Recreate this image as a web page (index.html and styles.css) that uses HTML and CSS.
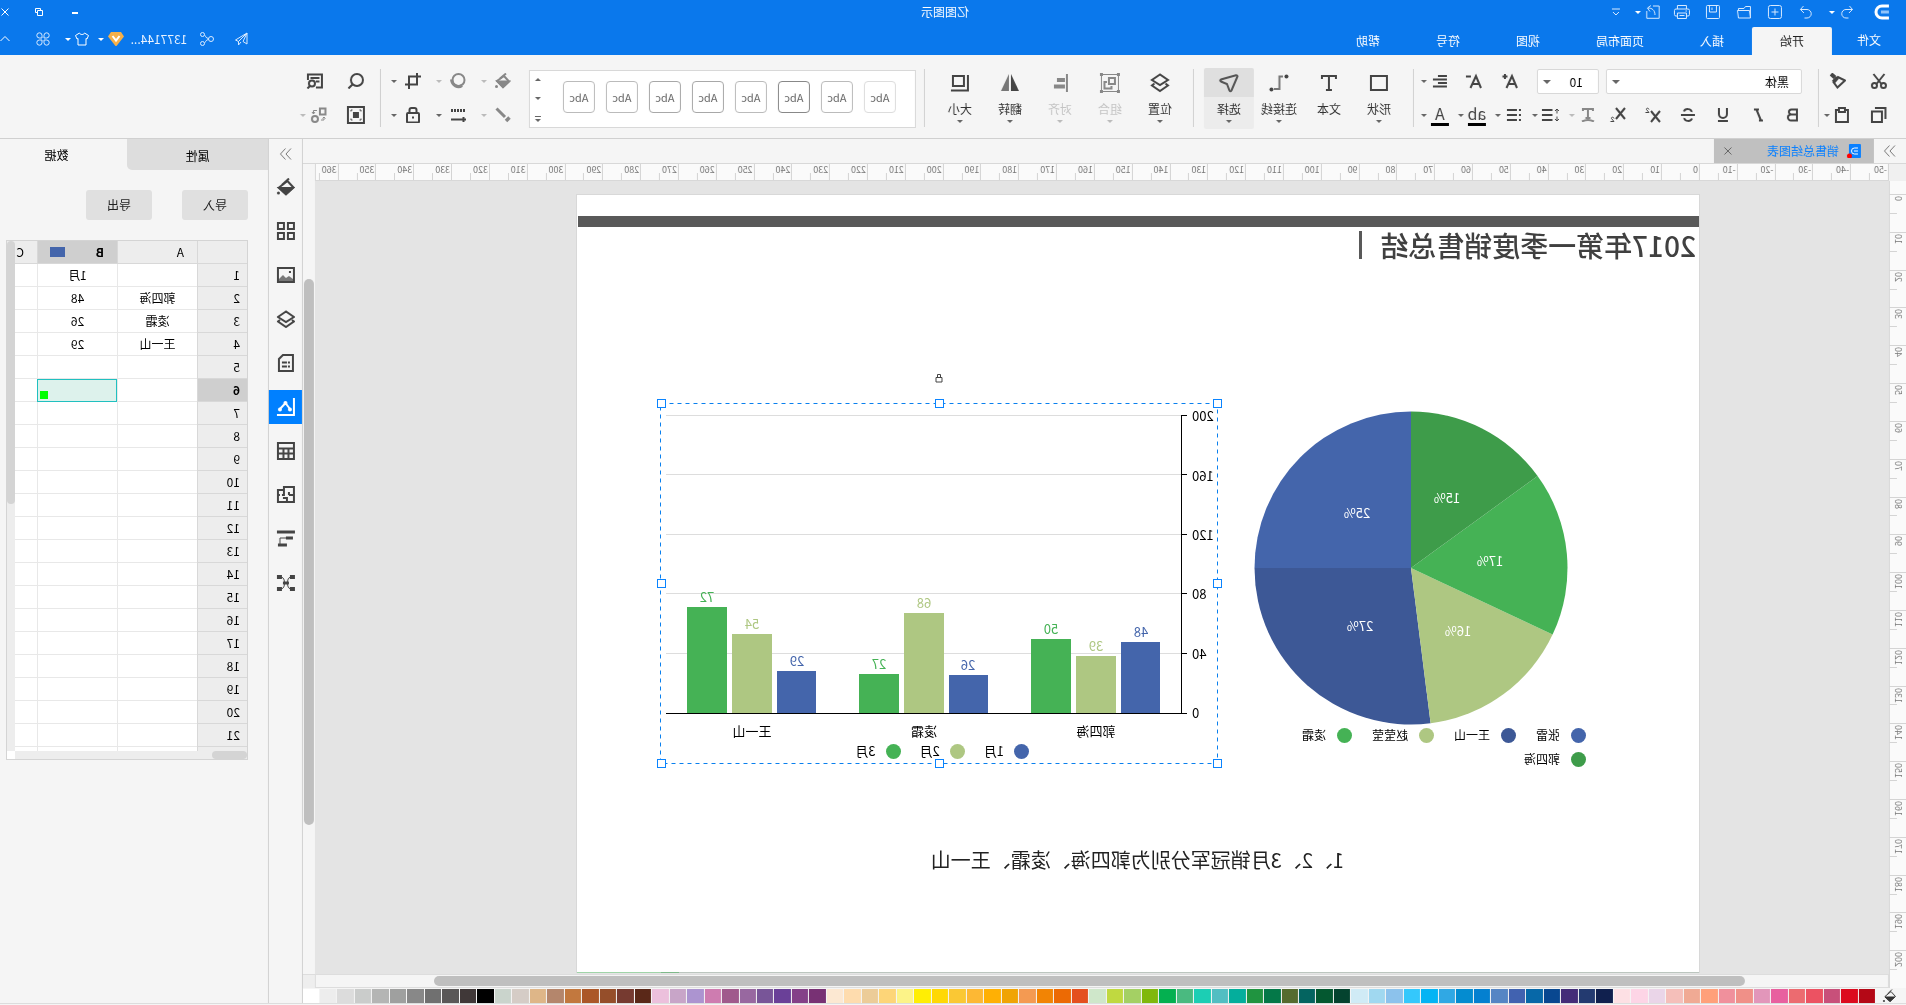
FILE: index.html
```html
<!DOCTYPE html>
<html lang="zh-CN">
<head>
<meta charset="utf-8">
<title>亿图图示</title>
<link rel="stylesheet" href="styles.css">
</head>
<body>
<div class="app">

<header class="top">
  <div class="titlebar">
    <div class="quick">
      <svg class="logo" viewBox="0 0 16 16"><path d="M1 2h7a6 6 0 0 1 0 12H1" fill="none" stroke="#fff" stroke-width="3"/><path d="M1 8h8" stroke="#8fc3fa" stroke-width="3"/></svg>
      <button class="q undo" aria-label="撤销"><svg class="i14" viewBox="0 0 14 14"><path d="M4.500 1 1.500 4.500 5 8M1.500 4.500H8a4 4 0 0 1 0 8.500H5.500"/></svg><span class="caret"></span></button>
      <button class="q" aria-label="重做"><svg class="i14" viewBox="0 0 14 14"><path d="M9.500 1l3 3.500L9 8M12.500 4.500H6A4 4 0 0 0 6 13h2.500"/></svg></button>
      <button class="q" aria-label="新建"><svg class="i14" viewBox="0 0 14 14"><rect x=".5" y=".5" width="13" height="13" rx="2"/><path d="M7 3.500v7M3.500 7h7"/></svg></button>
      <button class="q" aria-label="打开"><svg class="i14" viewBox="0 0 14 14"><path d="M.5 13V1.500h5l1.500 2h5.500v2M.5 13l1-7.500h12l-1 7.500z"/></svg></button>
      <button class="q" aria-label="保存"><svg class="i14" viewBox="0 0 14 14"><rect x=".5" y=".5" width="13" height="13" rx="1"/><path d="M3.500.5v6.500h7V.5M8 2.500v2.500"/></svg></button>
      <button class="q" aria-label="打印"><svg class="i16" viewBox="0 0 16 14"><path d="M3.500 4V.5h9V4M3.500 11H2a1.500 1.500 0 0 1-1.500-1.500v-4A1.500 1.500 0 0 1 2 4h12a1.500 1.500 0 0 1 1.500 1.500v4A1.500 1.500 0 0 1 14 11h-1.500M3.500 8h9v5.500h-9zM5.500 10.500h5M3 6h1.500"/></svg></button>
      <button class="q export" aria-label="导出"><svg class="i14" viewBox="0 0 14 14"><path d="M7 1H.8v12.300h12.400V6M5 10c0-5 3-7 7-7M9 .5 12.500 3 10 6.500"/></svg><span class="caret"></span></button>
      <button class="q more" aria-label="更多"><svg class="i8" viewBox="0 0 8 8"><path d="M0 1h8M1 4l3 3 3-3"/></svg></button>
    </div>
    <div class="app-title">亿图图示</div>
    <div class="window">
      <button class="w" aria-label="最小化"><svg class="i8" viewBox="0 0 8 8"><path class="thick" d="M1 5h6"/></svg></button>
      <button class="w" aria-label="还原"><svg class="i8" viewBox="0 0 8 8"><path d="M2.500 2.500V.5h5v4h-2M.5 2.500h5v5h-5z"/></svg></button>
      <button class="w last" aria-label="关闭"><svg class="i8" viewBox="0 0 8 8"><path d="M.5.5l7 7M7.500.5l-7 7"/></svg></button>
    </div>
  </div>
  <div class="menubar">
    <nav class="tabs">
      <a class="file" href="#">文件</a><a class="active" href="#">开始</a><a href="#">插入</a><a href="#">页面布局</a><a href="#">视图</a><a href="#">符号</a><a href="#">帮助</a>
    </nav>
    <div class="account">
      <button class="a" aria-label="发送"><svg class="i14" viewBox="0 0 14 14"><path d="M1 1l11.500 7-3 1.500zM1 1v11L5 9.500zM9.500 9.500v3.500L7 10"/></svg></button>
      <button class="a" aria-label="分享"><svg class="i14" viewBox="0 0 14 14"><circle cx="3" cy="7" r="2.500"/><circle cx="11.500" cy="2.500" r="2"/><circle cx="11.500" cy="11.500" r="2"/><path d="M5.500 6.500c3 0 3-3.500 4-3.500M5.500 7.500c3 0 3 3.500 4 3.500"/></svg></button>
      <button class="user">1377144...</button>
      <button class="gem" aria-label="会员"><svg class="i16" viewBox="0 0 16 14"><path d="M3 0h10l3 4.500L8.500 14h-1L0 4.500z" fill="#f5b04a" stroke="none"/><path class="thick" d="M4.500 4 8 8.500 11.500 4" stroke="#fff"/></svg><span class="caret"></span></button>
      <button class="shirt" aria-label="皮肤"><svg class="i14" viewBox="0 0 14 14"><path d="M4.500 1 .5 3.500 2 7l1-.5V13h8V6.500l1 .5 1.500-3.500-4-2.500c-.5 2-4.500 2-5 0z"/></svg><span class="caret"></span></button>
      <button class="a" aria-label="应用"><svg class="i14" viewBox="0 0 14 14"><path d="M6 6H3.300A2.600 2.600 0 1 1 6 3.300zM8 6h2.700A2.600 2.600 0 1 0 8 3.300zM6 8H3.300A2.600 2.600 0 1 0 6 10.700zM8 8h2.700A2.600 2.600 0 1 1 8 10.700z"/></svg></button>
      <button class="fold" aria-label="收起"><svg class="i10" viewBox="0 0 10 8"><path d="M.5 6 5 1.500 9.500 6"/></svg></button>
    </div>
  </div>
</header>

<section class="ribbon">
  <div class="group clip">
    <div class="row">
      <button class="b34" aria-label="剪切"><svg class="i16" viewBox="0 0 16 16"><path d="M2.500 1l8 10M13.500 1l-8 10"/><circle cx="3.500" cy="12.500" r="2.500"/><circle cx="12.500" cy="12.500" r="2.500"/></svg></button>
      <button class="b34" aria-label="格式刷"><svg class="i16" viewBox="0 0 16 16"><path d="M1 7.500 8 4l4.500 5-4 5.500z"/><path d="M8.500 4.500 12.500 9" stroke-width="4"/><path d="M11 4.500 15 1" stroke-width="4"/></svg></button>
    </div>
    <div class="row">
      <button class="b34" aria-label="复制"><svg class="i16" viewBox="0 0 16 16"><rect x="5" y="4.500" width="10" height="10.500"/><path d="M1.500 12V1H12"/></svg></button>
      <button class="split" aria-label="粘贴"><svg class="i16" viewBox="0 0 16 16"><path d="M5 3H2v12h12V3h-3"/><rect x="5" y="1" width="6" height="4"/></svg><span class="caret"></span></button>
    </div>
  </div>
  <div class="group font">
    <div class="row">
      <button class="combo family" aria-label="字体"><span>黑体</span><span class="caret"></span></button>
      <button class="combo size" aria-label="字号"><span>10</span><span class="caret"></span></button>
      <button class="b36" aria-label="增大字号"><svg class="i16" viewBox="0 0 16 16"><path d="M1 15 6 3l5.500 12M3 11h6.500M13 1v5M10.500 3.500h5"/></svg></button>
      <button class="b36" aria-label="减小字号"><svg class="i16" viewBox="0 0 16 16"><path d="M1 15 6 3l5.500 12M3 11h6.500M11 3.500h5"/></svg></button>
      <button class="split push" aria-label="对齐"><svg class="i14" viewBox="0 0 14 14"><path d="M0 2h9M0 5.500h14M0 9h9M0 12.500h14"/></svg><span class="caret"></span></button>
    </div>
    <div class="row">
      <button class="b35" aria-label="加粗"><svg class="i14" viewBox="0 0 14 14"><path d="M3 1.500h5.500a2.500 2.500 0 0 1 0 5H3zM3 6.500h6a3 3 0 0 1 0 6H3z"/></svg></button>
      <button class="b35" aria-label="斜体"><svg class="i14" viewBox="0 0 14 14"><path d="M3 1.500h5M8 12.500h4M5.500 1.500 10 12.500" transform="translate(14 0) scale(-1 1)"/></svg></button>
      <button class="b35" aria-label="下划线"><svg class="i14" viewBox="0 0 14 14"><path d="M3 0v6a4 4 0 0 0 8 0V0M2 13h10"/></svg></button>
      <button class="b35" aria-label="删除线"><svg class="i14" viewBox="0 0 14 14"><path d="M0 7h14M11 3.500C10 0 3 .5 3.500 4M3 10.500c1 3.500 8 3 7.500-.5"/></svg></button>
      <button class="b35" aria-label="上标"><svg class="i16" viewBox="0 0 16 16"><path d="M1 4l9 11M10 4 1 15"/><path d="M12 2.500c.5-2 3-1.500 2.500 0L12 5.500h3.500" stroke-width="1"/></svg></button>
      <button class="b35" aria-label="下标"><svg class="i16" viewBox="0 0 16 16"><path d="M1 1l9 11M10 1 1 12"/><path d="M12 11.500c.5-2 3-1.500 2.500 0L12 14.500h3.500" stroke-width="1"/></svg></button>
      <button class="split off" aria-label="文字方向"><svg class="i14" viewBox="0 0 14 14"><path d="M2 3V1h10v2M7 1v9M4.500 10h5M1 13.500c4-2 8-2 12 0"/></svg><span class="caret"></span></button>
      <button class="split" aria-label="行距"><svg class="i18" viewBox="0 0 18 14"><path d="M7.500 2H18M7.500 7H18M7.500 12H18"/><path d="M3 1v4.500M3 8.500V13M1 3l2-2 2 2M1 11l2 2 2-2" stroke-width="1"/></svg><span class="caret"></span></button>
      <button class="split" aria-label="项目符号"><svg class="i14" viewBox="0 0 14 14"><path d="M4 2h10M4 7h10M4 12h10M0 2h2M0 7h2M0 12h2"/></svg><span class="caret"></span></button>
      <button class="split mark" aria-label="突出显示"><span class="glyph">ab</span><span class="caret"></span></button>
      <button class="split mark" aria-label="字体颜色"><span class="glyph">A</span><span class="caret"></span></button>
    </div>
  </div>
  <div class="group tools">
    <button class="big"><svg class="i20" viewBox="0 0 20 20"><rect x="2" y="3" width="16" height="14"/></svg>形状<span class="caret"></span></button>
    <button class="big"><svg class="i20" viewBox="0 0 20 20"><path d="M3 6V3h14v3M10 3v14M7 17h6"/></svg>文本<span class="caret none"></span></button>
    <button class="big"><svg class="i20" viewBox="0 0 20 20"><path d="M17 16.500h-6V4H4" transform="translate(21 20.500) scale(-1 -1)" stroke="none"/><path d="M3 3h8v13h6" stroke="none"/><path d="M6 3.500h3.500V16H15" stroke="#777"/><circle cx="2.500" cy="3.500" r="2" fill="#444" stroke="none"/><circle cx="17.500" cy="16.500" r="2" fill="#444" stroke="none"/></svg>连接线<span class="caret"></span></button>
    <button class="big on"><svg class="i20" viewBox="0 0 20 20"><path d="M1.500 3.500Q1.500 2 3 2.200L18 6.500q1.500 1 0 2L12 11 9.500 17.500q-1 1.500-2 0z" stroke="#555"/></svg>选择<span class="caret"></span></button>
  </div>
  <div class="group arrange">
    <button class="big"><svg class="i20" viewBox="0 0 20 20"><path d="M10 1.500 18 7l-8 5-8-5zM4.500 10.500 2 12.500l8 5.500 8-5.500-2.500-2"/></svg>位置<span class="caret"></span></button>
    <button class="big off"><svg class="i20" viewBox="0 0 20 20"><path d="M1.500 1.500h17v17h-17z" stroke-width="1"/><path d="M0 0h3v3H0zM17 0h3v3h-3zM0 17h3v3H0zM17 17h3v3h-3z" fill="#888" stroke="none"/><rect x="5" y="5" width="6" height="6"/><path d="M13 9h2.500v6.500H8.500V13"/></svg>组合<span class="caret"></span></button>
    <button class="big off"><svg class="i20" viewBox="0 0 20 20"><path d="M3 1v18"/><path d="M5 7h8M5 13.500h11" stroke-width="4"/></svg>对齐<span class="caret"></span></button>
    <button class="big"><svg class="i20" viewBox="0 0 20 20"><path d="M9 1v17H1z" fill="#444" stroke="none"/><path d="M11 1v17h8z" fill="#777" stroke="none"/></svg>翻转<span class="caret"></span></button>
    <button class="big"><svg class="i20" viewBox="0 0 20 20"><rect x="6" y="3" width="11" height="10"/><path d="M2 2v15.500h17"/></svg>大小<span class="caret"></span></button>
  </div>
  <div class="gallery">
    <button class="s1">Abc</button><button class="s2">Abc</button><button class="s4">Abc</button><button class="s2">Abc</button><button class="s3">Abc</button><button class="s3">Abc</button><button class="s2">Abc</button><button class="s2">Abc</button>
    <div class="steps"><span class="caret up"></span><span class="caret"></span><svg class="last" viewBox="0 0 6 6"><path d="M0 .5h6"/><path d="M0 3h6L3 6z" fill="#666" stroke="none"/></svg></div>
  </div>
  <div class="group style">
    <div class="row">
      <button class="wide off" aria-label="填充"><svg class="i16" viewBox="0 0 16 16"><path d="M7 3 2 8.500 8 14l6-6z"/><path d="M2 8.500h11.500L8 14z" fill="currentColor"/><path d="M5 .5l6 5"/><circle cx="14.500" cy="13.500" r="1.500" fill="currentColor" stroke="none"/></svg><span class="caret"></span></button>
      <button class="wide off" aria-label="阴影"><svg class="i16" viewBox="0 0 16 16"><circle cx="7.500" cy="7" r="6"/><path d="M4 12.500c4 3 10 0 10.500-6" stroke-width="3"/></svg><span class="caret"></span></button>
      <button class="wide" aria-label="裁剪"><svg class="i16" viewBox="0 0 16 16"><path d="M0 3.500h12V12M4 0v11.500h12M12 12v4"/></svg><span class="caret"></span></button>
    </div>
    <div class="row">
      <button class="wide off" aria-label="线条颜色"><svg class="i16" viewBox="0 0 16 16"><path d="M14.500 1.500 6 10" stroke-width="3"/><path d="M4.500 11 2 13.500" stroke-width="5"/></svg><span class="caret"></span></button>
      <button class="wide" aria-label="线型"><svg class="i16" viewBox="0 0 16 16"><path d="M1 3.500h14" stroke-width="3" stroke-dasharray="2 1"/><path d="M0 12.500h15M2.500 10v5"/></svg><span class="caret"></span></button>
      <button class="wide" aria-label="锁定"><svg class="i16" viewBox="0 0 16 16"><rect x="2" y="6" width="12" height="9.500" rx="1"/><path d="M4.500 6V3q0-2 2-2h3q2 0 2 2v3M7 10.500h2"/></svg><span class="caret"></span></button>
    </div>
  </div>
  <div class="group find">
    <div class="row">
      <button class="b26" aria-label="查找"><svg class="i16" viewBox="0 0 16 16"><circle cx="7" cy="7" r="6"/><path d="M11.500 11.500 15.500 15.500"/></svg></button>
      <button class="b34" aria-label="查找替换"><svg class="i16" viewBox="0 0 16 16"><path d="M7 14.500H1V1.500h14V7M3.500 5h9M3.500 8.500H7"/><circle cx="11" cy="10.500" r="3"/><path d="M13 13l2.500 2.500"/></svg></button>
    </div>
    <div class="row">
      <button class="b26" aria-label="适应窗口"><svg class="i18" viewBox="0 0 18 18"><rect x="1" y="1" width="16" height="16"/><rect x="6" y="6" width="6" height="6" fill="currentColor" stroke="none"/><path d="M4 5.500V4h1.500M12.500 4H14v1.500M14 12.500V14h-1.500M5.500 14H4v-1.500" stroke-width="1"/></svg></button>
      <button class="split off" aria-label="替换图形"><svg class="i16" viewBox="0 0 16 16"><rect x="1.500" y="1.500" width="5.500" height="6"/><circle cx="12" cy="12" r="3"/><path d="M10 3.500h3.500V7M12 5l1.500 2L15 5M6 13H3v-3M1.500 11.500 3 10l1.500 1.500" stroke-width="1"/></svg><span class="caret"></span></button>
    </div>
  </div>
</section>

<main class="body">
  <section class="work">
    <div class="docs">
      <button class="more" aria-label="展开面板"><svg class="i12" viewBox="0 0 12 12"><path d="M1 .5 6 6l-5 5.500M6.500.5l5 5.500-5 5.500"/></svg></button>
      <div class="doc"><svg class="i14" viewBox="0 0 14 14"><rect x="0" y="0" width="12" height="14" rx="1" fill="#0a80ff" stroke="none"/><path d="M3 4h3.500a3 3 0 0 1 0 6H3M3 7h4" stroke="#fff"/><circle cx="11.500" cy="12" r="2.500" fill="#f00" stroke="none"/></svg><a href="#">销售总结图表</a><button aria-label="关闭"><svg class="i8" viewBox="0 0 8 8"><path d="M.5.5l7 7M7.500.5l-7 7"/></svg></button></div>
    </div>
    <div class="corner"></div>
    <div class="hruler"><div class="scale"><span>-50</span><span>-40</span><span>-30</span><span>-20</span><span>-10</span><span>0</span><span>10</span><span>20</span><span>30</span><span>40</span><span>50</span><span>60</span><span>70</span><span>80</span><span>90</span><span>100</span><span>110</span><span>120</span><span>130</span><span>140</span><span>150</span><span>160</span><span>170</span><span>180</span><span>190</span><span>200</span><span>210</span><span>220</span><span>230</span><span>240</span><span>250</span><span>260</span><span>270</span><span>280</span><span>290</span><span>300</span><span>310</span><span>320</span><span>330</span><span>340</span><span>350</span><span>360</span></div></div>
    <div class="vruler"><div class="scale"><span><b>0</b></span><span><b>10</b></span><span><b>20</b></span><span><b>30</b></span><span><b>40</b></span><span><b>50</b></span><span><b>60</b></span><span><b>70</b></span><span><b>80</b></span><span><b>90</b></span><span><b>100</b></span><span><b>110</b></span><span><b>120</b></span><span><b>130</b></span><span><b>140</b></span><span><b>150</b></span><span><b>160</b></span><span><b>170</b></span><span><b>180</b></span><span><b>190</b></span><span><b>200</b></span></div></div>
    <div class="canvas">
      <article class="page">
        <div class="band"></div>
        <h1>2017年第一季度销售总结<i></i></h1>
        <svg class="pie" viewBox="0 0 320 360">
          <g transform="translate(158 158)">
            <path fill="#4465ab" d="M0 0V-156.500A156.500 156.500 0 0 1 156.500 0z"/>
            <path fill="#3d5896" d="M0 0H156.500A156.500 156.500 0 0 1-19.600 155.300z"/>
            <path fill="#aec782" d="M0 0-19.600 155.300A156.500 156.500 0 0 1-141.600 66.600z"/>
            <path fill="#45b255" d="M0 0-141.600 66.600A156.500 156.500 0 0 1-126.600-92z"/>
            <path fill="#3e9c4a" d="M0 0-126.600-92A156.500 156.500 0 0 1 0-156.500z"/>
            <g class="pct"><text x="54" y="-50">25%</text><text x="51" y="63">27%</text><text x="-47" y="68">16%</text><text x="-79" y="-2">17%</text><text x="-36" y="-65">15%</text></g>
          </g>
        </svg>
        <ul class="legend people">
          <li><i style="background:#4465ab"></i>张雷</li><li><i style="background:#3d5896"></i>王一山</li><li><i style="background:#aec782"></i>赵莹莹</li><li><i style="background:#45b255"></i>凌霜</li><li><i style="background:#3e9c4a"></i>郭四海</li>
        </ul>
        <svg class="bars" viewBox="0 0 557 360">
          <g stroke="#ddd"><path d="M36 12.500H552M36 71.500H552M36 131.500H552M36 190.500H552M36 250.500H552"/></g>
          <path d="M36.500 12V310M31 12.500h5M31 71.500h5M31 131.500h5M31 190.500h5M31 250.500h5M31 310.500H552" stroke="#000"/>
          <g class="axis"><text x="26" y="18">200</text><text x="26" y="78">160</text><text x="26" y="137">120</text><text x="26" y="196">80</text><text x="26" y="256">40</text><text x="26" y="315">0</text></g>
          <g fill="#4465ab"><rect x="58" y="239" width="39" height="71"/><rect x="230" y="272" width="39" height="38"/><rect x="402" y="268" width="39" height="42"/><g class="val"><text x="77" y="234">48</text><text x="250" y="267">26</text><text x="421" y="263">29</text></g></g>
          <g fill="#aec782"><rect x="102" y="253" width="40" height="57"/><rect x="274" y="210" width="40" height="100"/><rect x="446" y="231" width="40" height="79"/><g class="val"><text x="122" y="248">39</text><text x="294" y="205">68</text><text x="466" y="226">54</text></g></g>
          <g fill="#45b255"><rect x="147" y="236" width="40" height="74"/><rect x="319" y="271" width="40" height="39"/><rect x="491" y="204" width="40" height="106"/><g class="val"><text x="167" y="231">50</text><text x="339" y="266">27</text><text x="511" y="199">72</text></g></g>
          <g class="cat"><text x="122" y="333">郭四海</text><text x="294" y="333">凌霜</text><text x="466" y="333">王一山</text></g>
        </svg>
        <ul class="legend months">
          <li><i style="background:#4465ab"></i>1月</li><li><i style="background:#aec782"></i>2月</li><li><i style="background:#45b255"></i>3月</li>
        </ul>
        <svg class="select" viewBox="0 0 567 370">
          <rect x="5.500" y="5.500" width="557" height="360" fill="none" stroke="#0a80ee" stroke-dasharray="4 4"/>
          <g fill="#fff" stroke="#0a84ff"><rect x="1.500" y="1.500" width="8" height="8"/><rect x="279.500" y="1.500" width="8" height="8"/><rect x="557.500" y="1.500" width="8" height="8"/><rect x="1.500" y="181.500" width="8" height="8"/><rect x="557.500" y="181.500" width="8" height="8"/><rect x="1.500" y="361.500" width="8" height="8"/><rect x="279.500" y="361.500" width="8" height="8"/><rect x="557.500" y="361.500" width="8" height="8"/></g>
        </svg>
        <svg class="pin i10" viewBox="0 0 10 10"><path d="M2 4.500h6V9H2zM3.500 4.500v-3h3v3" stroke="#444" stroke-width="1"/></svg>
        <p class="note">1、2、3月销冠军分别为郭四海、凌霜、王一山</p>
        <div class="edge"><span></span><span></span><span></span></div>
      </article>
    </div>
    <div class="vscroll"><span></span></div>
    <div class="hscroll"><span></span></div>
    <div class="scrollcorner"></div>
    <div class="palette">
      <button class="bucket" aria-label="填充颜色"><svg class="i14" viewBox="0 0 14 14"><path d="M6 2.500 1.500 7.500 7 12.500 12 7.500zM5 .5l4 4"/><path d="M2 8h10L7 12.500z" fill="currentColor"/><circle cx="13" cy="12" r="1" fill="currentColor" stroke="none"/></svg></button>
      <div class="chips"><i style="background:#b40816"></i><i style="background:#dc0a1e"></i><i style="background:#c8507a"></i><i style="background:#ec5262"></i><i style="background:#ec6b70"></i><i style="background:#e8609f"></i><i style="background:#e296ba"></i><i style="background:#f09088"></i><i style="background:#f0909c"></i><i style="background:#ffa07a"></i><i style="background:#f0aa94"></i><i style="background:#f5bfba"></i><i style="background:#ead5e8"></i><i style="background:#fdd5e6"></i><i style="background:#fde0e4"></i><i style="background:#10204e"></i><i style="background:#233a70"></i><i style="background:#442c78"></i><i style="background:#084790"></i><i style="background:#0768a8"></i><i style="background:#4162b0"></i><i style="background:#5585c4"></i><i style="background:#0480d0"></i><i style="background:#048cd0"></i><i style="background:#30a8e4"></i><i style="background:#04b4f4"></i><i style="background:#34c8fc"></i><i style="background:#8cc2ec"></i><i style="background:#a0d8f0"></i><i style="background:#d0ebf6"></i><i style="background:#04432f"></i><i style="background:#045830"></i><i style="background:#046460"></i><i style="background:#556b2f"></i><i style="background:#047848"></i><i style="background:#209440"></i><i style="background:#04ae9c"></i><i style="background:#52bec2"></i><i style="background:#1cceb4"></i><i style="background:#4aba80"></i><i style="background:#04b050"></i><i style="background:#80b80c"></i><i style="background:#a4d064"></i><i style="background:#c0d940"></i><i style="background:#cfe7ca"></i><i style="background:#e4501f"></i><i style="background:#ec6a04"></i><i style="background:#f28404"></i><i style="background:#f49a52"></i><i style="background:#f0a404"></i><i style="background:#ffb004"></i><i style="background:#fdb834"></i><i style="background:#fac834"></i><i style="background:#ffd804"></i><i style="background:#ffee04"></i><i style="background:#fcf388"></i><i style="background:#fdd578"></i><i style="background:#eccc98"></i><i style="background:#fedcae"></i><i style="background:#fce8d2"></i><i style="background:#783174"></i><i style="background:#844088"></i><i style="background:#6a4098"></i><i style="background:#785598"></i><i style="background:#9868a0"></i><i style="background:#a05a8c"></i><i style="background:#ce7cb0"></i><i style="background:#ac94d0"></i><i style="background:#c8a5c8"></i><i style="background:#ecc0dc"></i><i style="background:#5a2818"></i><i style="background:#763a30"></i><i style="background:#954e2a"></i><i style="background:#ab5728"></i><i style="background:#c2783e"></i><i style="background:#b4866c"></i><i style="background:#deb688"></i><i style="background:#d5ccc6"></i><i style="background:#cad4cc"></i><i style="background:#000"></i><i style="background:#403838"></i><i style="background:#5a5858"></i><i style="background:#707070"></i><i style="background:#888"></i><i style="background:#9fa09f"></i><i style="background:#b4b5b4"></i><i style="background:#cacccb"></i><i style="background:#dcdcdc"></i><i style="background:#ededed"></i><i style="background:#fff"></i></div>
    </div>
  </section>

  <aside class="rail">
    <button class="collapse" aria-label="折叠"><svg class="i12" viewBox="0 0 12 12"><path d="M1 .5 6 6l-5 5.500M6.500.5l5 5.500-5 5.500"/></svg></button>
    <button aria-label="填充"><svg class="i18" viewBox="0 0 18 18"><path d="M7.500 3 1.500 9.500 9 16l7-6.500z"/><path d="M2 10h14l-7 6.500z" fill="currentColor"/><path d="M6 .5 13 7"/><circle cx="16.500" cy="15" r="1.500" fill="currentColor" stroke="none"/></svg></button>
    <button aria-label="符号库"><svg class="i18" viewBox="0 0 18 18"><rect x="1" y="1" width="6" height="6"/><path d="M11 1h6v6h-6z"/><rect x="1" y="11" width="6" height="6"/><rect x="11" y="11" width="6" height="6"/></svg></button>
    <button aria-label="图片"><svg class="i18" viewBox="0 0 18 18"><rect x="1" y="2" width="16" height="14"/><path d="M2 15v-2l4-3 3 2 3-3 4 4v2z" fill="#777" stroke="none"/><path d="M4 6h2"/></svg></button>
    <button aria-label="图层"><svg class="i18" viewBox="0 0 18 18"><path d="M9 1.500 17 7l-8 5-8-5zM3 10l-2 1.500L9 17l8-5.500-2-1.500"/></svg></button>
    <button aria-label="页面"><svg class="i18" viewBox="0 0 18 18"><path d="M2 1h10l4 4v12H2zM5 8.500h2M8 8.500h5M5 12.500h2M8 12.500h5"/></svg></button>
    <button class="on" aria-label="图表"><svg class="i18" viewBox="0 0 18 18"><path d="M1 0v17h17M5 11l4.500-6L15 11"/><g fill="#fff" stroke="none"><circle cx="5" cy="11.500" r="2"/><circle cx="9.500" cy="5" r="2"/><circle cx="15" cy="11.500" r="2"/></g></svg></button>
    <button aria-label="表格"><svg class="i18" viewBox="0 0 18 18"><path d="M1 1h16v16H1zM1 6.500h16M1 11.500h16M6.500 7v10M11.500 7v10"/></svg></button>
    <button aria-label="平面图"><svg class="i18" viewBox="0 0 18 18"><path d="M1 1h10v3h6v12H1zM1 9h5M6 6v3M8 16v-4h4M11 4v5h2M17 9h-2"/></svg></button>
    <button aria-label="甘特图"><svg class="i18" viewBox="0 0 18 18"><path d="M0 2h18" stroke-width="3"/><path d="M2 8h7M8 15h9" stroke-width="3"/><path d="M9 8h6v6" stroke-width="1"/></svg></button>
    <button aria-label="思维导图"><svg class="i18" viewBox="0 0 18 18"><path d="M3 3c6 0 3 6 6 6s0 6 6 6M15 3c-6 0-3 6-6 6s0 6-6 6" stroke-width="1"/><path d="M6 9h6" stroke-width="3"/><path d="M0 3h5M13 3h5M0 15h5M13 15h5" stroke-width="4"/></svg></button>
  </aside>

  <aside class="panel">
    <div class="ptabs"><button class="prop">属性</button><button>数据</button></div>
    <div class="io"><button>导入</button><button>导出</button></div>
    <div class="sheet">
      <div class="view">
        <table>
          <thead><tr><th></th><th>A</th><th class="cur">B<i></i></th><th>C</th></tr></thead>
          <tbody>
            <tr><th>1</th><td></td><td>1月</td><td></td></tr>
            <tr><th>2</th><td>郭四海</td><td>48</td><td></td></tr>
            <tr><th>3</th><td>凌霜</td><td>26</td><td></td></tr>
            <tr><th>4</th><td>王一山</td><td>29</td><td></td></tr>
            <tr><th>5</th><td></td><td></td><td></td></tr>
            <tr><th class="cur">6</th><td></td><td class="sel"></td><td></td></tr>
            <tr><th>7</th><td></td><td></td><td></td></tr>
            <tr><th>8</th><td></td><td></td><td></td></tr>
            <tr><th>9</th><td></td><td></td><td></td></tr>
            <tr><th>10</th><td></td><td></td><td></td></tr>
            <tr><th>11</th><td></td><td></td><td></td></tr>
            <tr><th>12</th><td></td><td></td><td></td></tr>
            <tr><th>13</th><td></td><td></td><td></td></tr>
            <tr><th>14</th><td></td><td></td><td></td></tr>
            <tr><th>15</th><td></td><td></td><td></td></tr>
            <tr><th>16</th><td></td><td></td><td></td></tr>
            <tr><th>17</th><td></td><td></td><td></td></tr>
            <tr><th>18</th><td></td><td></td><td></td></tr>
            <tr><th>19</th><td></td><td></td><td></td></tr>
            <tr><th>20</th><td></td><td></td><td></td></tr>
            <tr><th>21</th><td></td><td></td><td></td></tr>
            <tr><th></th><td></td><td></td><td></td></tr>
          </tbody>
        </table>
      </div>
      <div class="vs"><span></span></div>
      <div class="hs"><span></span></div>
    </div>
  </aside>
</main>
<footer class="status"></footer>
</div>
</body>
</html>
```

FILE: styles.css
```css
* { box-sizing: border-box; }
html, body { margin: 0; height: 100%; }
body {
  font: 12px/16px "Noto Sans CJK SC", "Liberation Sans", sans-serif;
  color: #222;
  background: #f5f5f5;
  overflow: hidden;
}
button { font: inherit; color: inherit; border: 0; background: none; padding: 0; margin: 0; display: flex; align-items: center; justify-content: center; }
a { color: inherit; text-decoration: none; }
svg { display: block; flex: none; fill: none; stroke: currentColor; stroke-width: 2; }
svg text { stroke: none; }
ul { list-style: none; margin: 0; padding: 0; }

.i8 { width: 8px; height: 8px; }
.i10 { width: 10px; height: 10px; }
.i12 { width: 12px; height: 12px; }
.i14 { width: 14px; height: 14px; }
.i16 { width: 16px; height: 16px; }
.i18 { width: 18px; height: 18px; }
.i20 { width: 20px; height: 20px; }

.caret { flex: none; width: 0; height: 0; border: 3px solid transparent; border-top-color: #666; border-bottom: 0; }

/* The whole window is shown flipped left to right. */
.app { height: 100vh; display: flex; flex-direction: column; transform: scaleX(-1); }

/* Header */
.top { background: #0a78ec; color: #fff; }
.top svg { stroke-width: 1; }
.top .thick { stroke-width: 2; }
.top .caret { border-top-color: #fff; }
.titlebar { height: 24px; padding-left: 16px; display: grid; grid-template-columns: 1fr auto 1fr; align-items: center; }
.quick { display: flex; align-items: center; color: #d8eaff; }
.logo { width: 16px; height: 16px; margin-right: 16px; }
.top .logo path { stroke-width: 3; }
.q { width: 31px; height: 22px; }
.q.undo { width: 36px; justify-content: flex-start; padding-left: 4px; gap: 5px; }
.q.export { width: 32px; justify-content: flex-end; gap: 5px; }
.q.more { width: 38px; }
.window { display: flex; justify-content: flex-end; }
.w { width: 36px; height: 22px; }
.w.last { width: 21px; justify-content: flex-end; }
.w.last svg { margin-right: 1px; }
.menubar { height: 31px; display: flex; justify-content: space-between; padding-top: 3px; }
.tabs { display: flex; }
.tabs a { padding: 6px 28px; height: 28px; }
.tabs .file { padding: 5px 25px 7px; }
.tabs .active { background: #f5f5f5; color: #222; border-radius: 2px 2px 0 0; }
.account { display: flex; align-items: center; height: 24px; }
.a { width: 34px; height: 24px; color: #d8eaff; }
.user { width: 62px; color: #e8f2ff; }
.gem, .shirt { gap: 4px; width: 34px; }
.account .fold { width: 26px; justify-content: flex-end; }

/* Ribbon */
.ribbon { height: 84px; flex: none; display: flex; align-items: flex-start; padding-top: 14px; border-bottom: 1px solid #d0d0d0; color: #444; }
.group { height: 58px; border-right: 1px solid #d0d0d0; }
.row { display: flex; height: 24px; margin-bottom: 10px; }
.b26 { width: 26px; }
.b34 { width: 34px; }
.b35 { width: 35px; }
.b36 { width: 36px; }
.split { width: 37px; justify-content: flex-start; }
.split > :first-child { margin: 0 auto 0 5px; }
.split > .i14:first-child { margin-left: 6px; }
.split > .i18:first-child { margin-left: 4px; }
.split .caret { margin-right: 5px; }
.off { color: #888; }
.off .caret { border-top-color: #bbb; }
.clip { width: 88px; padding-left: 10px; }
.clip .row { gap: 7px; }
.font { width: 405px; padding-left: 7px; }
.combo { height: 25px; background: #fff; border: 1px solid #d8d8d8; border-radius: 2px; justify-content: space-between; color: #000; }
.combo .caret { border-width: 4px 4px 0; }
.family { width: 196px; padding: 0 5px 0 12px; margin: 0 7px 0 9px; }
.size { width: 62px; padding: 0 5px 0 15px; margin-right: 9px; }
.push { margin-left: 3px; }
.mark .glyph { width: 18px; height: 21px; font-size: 16px; line-height: 16px; border-bottom: 3px solid #000; display: flex; justify-content: center; }
.mark > .glyph:first-child { margin-left: 4px; }
.tools, .arrange { display: flex; }
.tools { padding: 0 10px 0 9px; }
.arrange { padding: 0 10px 0 8px; }
.big { width: 50px; height: 61px; margin-top: -1px; flex-direction: column; justify-content: flex-start; padding-top: 5px; white-space: nowrap; color: #333; }
.big svg { margin-bottom: 8px; color: #444; }
.big .caret { margin-top: 3px; }
.big .none { visibility: hidden; }
.big.off { color: #c4c4c4; }
.big.off svg { color: #888; }
.big.on { border-radius: 2px; background: linear-gradient(#dfdfdf 29px, #ececec 29px); }
.gallery { height: 58px; margin: 1px 13px 0 8px; background: #fff; border: 1px solid #d8d8d8; display: flex; gap: 11px; padding: 10px 5px 0 19px; }
.gallery button { width: 32px; height: 32px; border: 1px solid #bbb; border-radius: 4px; font-size: 11px; color: #666; }
.gallery .s1 { border-color: #ddd; }
.gallery .s3 { border-color: #a8a8a8; }
.gallery .s4 { border-color: #888; }
.steps { display: flex; flex-direction: column; justify-content: space-between; height: 44px; margin: -3px 0 0 11px; }
.steps .up { transform: rotate(180deg); }
.steps .last { width: 6px; height: 6px; stroke: #666; stroke-width: 1; }
.wide { width: 45px; justify-content: flex-start; padding-left: 5px; gap: 8px; }
.style { width: 136px; }
.find { border: 0; padding-left: 11px; }
.find .row { gap: 11px; }

/* Body */
.body { flex: 1; min-height: 0; display: grid; grid-template-columns: 1fr 35px 268px; }
.status { height: 2px; flex: none; border-top: 1px solid #ddd; }
.work { min-width: 0; display: grid; grid-template: 24px 18px 1fr 14px 16px / 17px 1fr 12px; }
.docs { grid-column: 1 / -1; display: flex; }
.docs .more { width: 32px; color: #777; }
.docs svg, .collapse svg { stroke-width: 1; }
.doc { width: 160px; background: #c0c0c0; display: flex; align-items: center; padding: 0 10px 0 13px; color: #0a80ff; }
.doc a { flex: 1; padding-left: 8px; }
.doc button { color: #666; }
.corner { background: #f0f0f0; border-top: 1px solid #d8d8d8; }
.hruler { grid-column: 2 / 3; overflow: hidden; border: 1px solid #d8d8d8; border-left: 0; background: #fafafa; }
.scale { display: flex; font-size: 9px; line-height: 12px; color: #777; }
.scale span { flex: 1; }
.hruler .scale { width: 1588px; height: 16px; }
.hruler span { border-left: 1px solid #d4d4d4; padding-left: 1px; background: linear-gradient(#d4d4d4, #d4d4d4) 50% 100% / 1px 7px no-repeat; }
.vruler { grid-area: 3 / 1 / 5 / 2; overflow: hidden; background: #fafafa; border-right: 1px solid #d8d8d8; padding-top: 13px; }
.vruler .scale { flex-direction: column; height: 794px; }
.vruler span { border-top: 1px solid #d4d4d4; padding: 1px 0 0 2px; background: linear-gradient(#d4d4d4, #d4d4d4) 100% 50% / 7px 1px no-repeat; }
.vruler b { display: block; width: 12px; font-weight: normal; writing-mode: vertical-rl; transform: rotate(180deg); }
.canvas { grid-area: 3 / 2 / 4 / 3; background: #e4e4e4; overflow: hidden; padding: 13px 0 0 189px; }
.page { position: relative; width: 1124px; height: 779px; background: #fff; border: 1px solid #d8d8d8; border-bottom: 0; }
.band { margin: 21px 1px 0 0; height: 11px; background: #595959; }
.page h1 { margin: 0 0 0 3px; font-size: 28px; line-height: 36px; font-weight: 500; color: #404040; display: flex; align-items: center; gap: 18px; }
.page h1 i { width: 3px; height: 28px; background: #595959; }
.pie, .legend, .bars, .select, .pin, .note, .edge { position: absolute; margin: 0; }
.page text, .legend { font-size: 13px; }
.pie { left: 130px; top: 215px; width: 320px; height: 360px; stroke: none; }
.pct { fill: #fff; text-anchor: middle; }
.legend { display: flex; flex-wrap: wrap; line-height: 24px; color: #000; }
.legend li { display: flex; align-items: center; gap: 10px; }
.legend i { width: 15px; height: 15px; border-radius: 50%; }
.people { left: 113px; top: 528px; width: 320px; gap: 0 20px; font-size: 12px; }
.page .people { font-size: 12px; }
.people li { gap: 11px; }
.bars { left: 481px; top: 208px; width: 557px; height: 360px; stroke-width: 1; }
.bars rect { stroke: none; }
.axis { text-anchor: end; fill: #000; }
.val { text-anchor: middle; }
.cat { text-anchor: middle; fill: #000; }
.months { left: 670px; top: 544px; gap: 19px; }
.select { left: 476px; top: 203px; width: 567px; height: 370px; stroke-width: 1; }
.pin { left: 755px; top: 178px; }
.note { left: 355px; top: 650px; font-size: 20px; line-height: 30px; color: #222; white-space: nowrap; }
.edge { left: 0; right: 0; bottom: 0; height: 1px; display: flex; }
.edge span { background: #bcc6bf; flex: 1; }
.edge span + span { flex: none; width: 18px; background: #7fb98a; }
.edge span + span + span { width: 84px; background: #a0d4a8; }
.vscroll { grid-area: 2 / 3 / 4 / 4; padding: 115px 1px 0; border-top: 1px solid #d8d8d8; }
.vscroll span { display: block; height: 546px; border-radius: 5px; background: #bfbfbf; }
.hscroll { grid-area: 4 / 2 / 5 / 3; border: 1px solid #ddd; padding: 1px 118px 1px 143px; }
.hscroll span { display: block; height: 10px; border-radius: 5px; background: #bfbfbf; }
.scrollcorner { background: #eee; border-top: 1px solid #ddd; }
.palette { grid-column: 1 / -1; display: flex; padding: 1px 0; }
.bucket { width: 31px; color: #333; }
.palette .bucket svg { stroke-width: 1; }
.chips { flex: 1; display: flex; gap: 1px; }
.chips i { flex: 1; }

/* Icon rail */
.rail { border: 1px solid #d0d0d0; border-width: 0 1px; display: flex; flex-direction: column; gap: 10px; color: #444; }
.rail button { height: 34px; padding-right: 1px; }
.rail .collapse { height: 21px; padding-top: 9px; color: #777; }
.rail .on { background: #0080ff; color: #fff; }

/* Data panel */
.ptabs { display: flex; height: 31px; color: #000; }
.ptabs button { flex: 1; padding-left: 14px; }
.ptabs .prop { flex: none; width: 141px; padding: 3px 0 0; background: #ddd; border-radius: 0 0 5px 0; }
.io { display: flex; gap: 30px; padding: 20px; }
.io button { width: 66px; height: 30px; border-radius: 3px; background: #e0e0e0; }
.sheet { margin: 0 6px 0 20px; border: 1px solid #d4d4d4; display: grid; grid-template: 510px 8px / 1fr 8px; background: #fff; }
.view { overflow: hidden; }
.sheet table { border-collapse: collapse; table-layout: fixed; width: 250px; color: #000; margin: -1px; }
.sheet th, .sheet td { height: 23px; padding: 0; border: 1px solid #e8e8e8; text-align: center; font-weight: 400; }
.sheet th { background: #ededed; border-color: #d8d8d8; }
.sheet th:first-child { width: 50px; text-align: left; padding-left: 7px; }
.sheet th:nth-child(2), .sheet th:nth-child(3) { width: 80px; }
.sheet thead th + th { text-align: left; padding-left: 13px; }
.sheet .cur { background: #cfcfcf; font-weight: 700; }
.sheet thead i { float: right; width: 15px; height: 10px; margin: 3px 12px 0 0; background: #4465ab; }
.sheet .sel { background: linear-gradient(#0f0, #0f0) 69px 12px / 8px 8px no-repeat, #ddf2ec; outline: 1px solid #20c0c0; outline-offset: -1px; }
.vs, .hs { background: #ededed; }
.vs span { display: block; height: 263px; background: #d4d4d4; border-radius: 4px; }
.hs span { display: block; width: 35px; height: 8px; background: #d4d4d4; border-radius: 4px; }
```
